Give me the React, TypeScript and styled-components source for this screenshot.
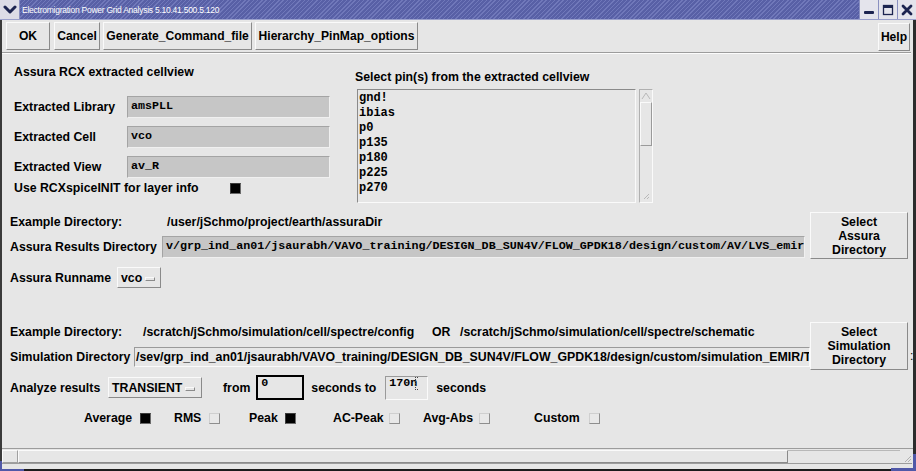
import React from "react";
import styled, { createGlobalStyle } from "styled-components";

const sans = `"Liberation Sans", Arial, Helvetica, sans-serif`;
const mono = `"Liberation Mono", "Courier New", monospace`;

const Global = createGlobalStyle`
  html, body { margin: 0; padding: 0; background: #e6e6e6; overflow: hidden; }
  #root { width: 916px; height: 471px; }
  * { box-sizing: border-box; }
`;

const Window = styled.div`
  width: 916px;
  height: 471px;
  display: flex;
  flex-direction: column;
  background: #e6e6e6;
  font-family: ${sans};
  color: #000;
`;

const TitleBar = styled.div`
  height: 20px;
  flex: none;
  display: flex;
  align-items: stretch;
  background: repeating-linear-gradient(135deg, #5860a6 0px, #5860a6 2px, #7078ba 2px, #7078ba 3px);
  border-bottom: 1px solid #9aa0cc;
`;

const MenuButton = styled.div`
  width: 20px;
  display: flex;
  align-items: center;
  justify-content: center;
  background: #dcdce6;
  border-right: 1px solid #8a90c0;
`;

const TitleText = styled.div`
  flex: 1;
  display: flex;
  align-items: center;
  padding-left: 2px;
  color: #fff;
  font-size: 8.5px;
  letter-spacing: -0.25px;
  white-space: nowrap;
`;

const WinButton = styled.div`
  width: 19px;
  display: flex;
  align-items: center;
  justify-content: center;
  background: #e4e4ec;
  border-left: 1px solid #8a90c0;
`;

const Frame = styled.div`
  position: relative;
  flex: 1;
  display: flex;
  flex-direction: column;
  border-left: 2px solid #3a3a3a;
  border-right: 3px solid #2c2c2c;
  border-bottom: 2px solid #1c1c1c;
  &::before {
    content: "";
    position: absolute;
    left: -2px;
    bottom: -2px;
    width: 22px;
    height: 8px;
    border-left: 2px solid #5058a8;
    border-bottom: 2px solid #5058a8;
  }
  &::after {
    content: "";
    position: absolute;
    right: -3px;
    bottom: -2px;
    width: 22px;
    height: 14px;
    border-right: 3px solid #5058a8;
    border-bottom: 3px solid #5058a8;
  }
`;

const Toolbar = styled.div`
  height: 32px;
  flex: none;
  display: flex;
  align-items: flex-start;
  padding: 2px 3px 0 4px;
`;

const ToolButton = styled.div<{ $w: number; $ml?: number; $auto?: boolean }>`
  width: ${(p) => p.$w}px;
  height: 28px;
  margin-left: ${(p) => (p.$auto ? "auto" : `${p.$ml ?? 0}px`)};
  margin-top: ${(p) => (p.$auto ? 1 : 0)}px;
  display: flex;
  align-items: center;
  justify-content: center;
  background: #e6e6e6;
  border: 1px solid;
  border-color: #fafafa #8a8a8a #8a8a8a #fafafa;
  font-weight: bold;
  font-size: 12.1px;
  white-space: nowrap;
`;

const Separator = styled.div`
  height: 2px;
  flex: none;
  margin-right: 2px;
  border-top: 1px solid #9c9c9c;
  border-bottom: 1px solid #fcfcfc;
`;

const TopSection = styled.div`
  display: flex;
  padding-left: 12px;
  flex: none;
`;

const LeftPanel = styled.div`
  width: 316px;
  padding-top: 11px;
  display: flex;
  flex-direction: column;
`;

const Heading = styled.div`
  height: 14px;
  line-height: 14px;
  font-weight: bold;
  font-size: 12.3px;
  white-space: nowrap;
`;

const FieldList = styled.div`
  margin-top: 17px;
  display: flex;
  flex-direction: column;
  gap: 8px;
`;

const Row = styled.div<{ $h: number; $mt?: number }>`
  height: ${(p) => p.$h}px;
  margin-top: ${(p) => p.$mt ?? 0}px;
  display: flex;
  align-items: center;
  flex: none;
`;

const Label = styled.div<{ $w?: number }>`
  width: ${(p) => (p.$w ? `${p.$w}px` : "auto")};
  flex: none;
  font-weight: bold;
  font-size: 12.3px;
  white-space: nowrap;
`;

const Value = styled.div<{ $w?: number }>`
  width: ${(p) => (p.$w ? `${p.$w}px` : "auto")};
  flex: none;
  font-weight: bold;
  font-size: 12.3px;
  white-space: nowrap;
`;

const ReadField = styled.div<{ $w: number }>`
  width: ${(p) => p.$w}px;
  height: 100%;
  flex: none;
  overflow: hidden;
  white-space: nowrap;
  background: #c6c6c6;
  border: 1px solid;
  border-color: #a4a4a4 #f0f0f0 #f0f0f0 #a4a4a4;
  font-family: ${mono};
  font-weight: bold;
  font-size: 11.7px;
  padding: 2px 0 0 3px;
`;

const TextField = styled.div<{ $w: number }>`
  width: ${(p) => p.$w}px;
  height: 100%;
  flex: none;
  overflow: hidden;
  white-space: nowrap;
  background: #e6e6e6;
  border: 1px solid;
  border-color: #9a9a9a #fafafa #fafafa #9a9a9a;
  font-weight: bold;
  font-size: 12.35px;
  line-height: 18px;
  padding-left: 1px;
`;

const Check = styled.span<{ $on?: boolean }>`
  display: inline-block;
  width: 11px;
  height: 11px;
  flex: none;
  background: ${(p) => (p.$on ? "#000" : "#e8e8e8")};
  border: 1px solid;
  border-color: ${(p) => (p.$on ? "#3a3a3a #6a6a6a #6a6a6a #3a3a3a" : "#cfcfcf #8e8e8e #8e8e8e #cfcfcf")};
`;

const RightPanel = styled.div`
  margin-left: 25px;
  padding-top: 16px;
  display: flex;
  flex-direction: column;
`;

const ListWrap = styled.div`
  margin-top: 5px;
  margin-left: 2px;
  display: flex;
  height: 114px;
`;

const ListBox = styled.div`
  width: 279px;
  height: 100%;
  border: 1px solid;
  border-color: #8a8a8a #fafafa #fafafa #8a8a8a;
  padding: 1px 0 0 1px;
  font-family: ${mono};
  font-weight: bold;
  font-size: 12px;
  line-height: 15px;
  overflow: hidden;
`;

const VScroll = styled.div`
  width: 14px;
  margin-left: 3px;
  height: 100%;
  display: flex;
  flex-direction: column;
  border: 1px solid;
  border-color: #b0b0b0 #fafafa #fafafa #b0b0b0;
`;

const ScrollArrow = styled.div`
  height: 12px;
  flex: none;
  display: flex;
  align-items: center;
  justify-content: center;
`;

const VThumb = styled.div`
  height: 44px;
  flex: none;
  border: 1px solid;
  border-color: #fafafa #9a9a9a #9a9a9a #fafafa;
`;

const VTrack = styled.div`
  flex: 1;
`;

const Section = styled.div<{ $mt: number }>`
  display: flex;
  align-items: flex-start;
  padding-left: 8px;
  margin-top: ${(p) => p.$mt}px;
  flex: none;
`;

const Column = styled.div<{ $w: number }>`
  width: ${(p) => p.$w}px;
  display: flex;
  flex-direction: column;
  flex: none;
`;

const SideButton = styled.div<{ $h: number; $ml?: number }>`
  width: 98px;
  height: ${(p) => p.$h}px;
  margin-left: ${(p) => p.$ml ?? 0}px;
  flex: none;
  display: flex;
  align-items: center;
  justify-content: center;
  text-align: center;
  background: #e6e6e6;
  border: 1px solid;
  border-color: #fafafa #8a8a8a #8a8a8a #fafafa;
  font-weight: bold;
  font-size: 12.3px;
  line-height: 14px;
`;

const Dropdown = styled.div<{ $w: number }>`
  width: ${(p) => p.$w}px;
  height: 21px;
  flex: none;
  display: flex;
  align-items: center;
  padding-left: 3px;
  background: #e6e6e6;
  border: 1px solid;
  border-color: #fafafa #8a8a8a #8a8a8a #fafafa;
  font-weight: bold;
  font-size: 12.3px;
`;

const DropBar = styled.span`
  width: 10px;
  height: 4px;
  margin-left: 3px;
  margin-top: 3px;
  background: #e6e6e6;
  border: 1px solid;
  border-color: #fafafa #8a8a8a #8a8a8a #fafafa;
`;

const EntryBox = styled.div<{ $w: number; $ml: number; $strong?: boolean }>`
  width: ${(p) => p.$w}px;
  height: ${(p) => (p.$strong ? 25 : 24)}px;
  margin-left: ${(p) => p.$ml}px;
  flex: none;
  position: relative;
  background: #e6e6e6;
  border: ${(p) => (p.$strong ? "2px solid #000" : "1px solid")};
  border-color: ${(p) => (p.$strong ? "#000" : "#9a9a9a #fafafa #fafafa #9a9a9a")};
  font-family: ${mono};
  font-weight: bold;
  font-size: 11.7px;
  line-height: 13px;
  padding: 0 0 0 3px;
`;

const Caret = styled.span`
  position: absolute;
  left: 30px;
  top: 0px;
  width: 3px;
  height: 13px;
  border-left: 1px dotted #444;
  border-top: 1px dotted #444;
  border-bottom: 1px dotted #444;
  transform: translateX(-1px);
`;

const Text = styled.span<{ $ml?: number }>`
  margin-left: ${(p) => p.$ml ?? 0}px;
  font-weight: bold;
  font-size: 12.3px;
  white-space: nowrap;
`;

const Stray = styled.div`
  width: 3px;
  margin-left: 2px;
  height: 14px;
  align-self: flex-start;
  margin-top: 28px;
  font-size: 12px;
  line-height: 12px;
  overflow: hidden;
`;

const CheckLine = styled.div`
  display: flex;
  align-items: center;
  height: 12px;
  margin-top: 12px;
  padding-left: 82px;
  flex: none;
`;

const CheckItem = styled.div<{ $w: number; $lw: number }>`
  width: ${(p) => p.$w}px;
  display: grid;
  grid-template-columns: ${(p) => p.$lw}px 11px;
  align-items: center;
  flex: none;
`;

const Spacer = styled.div`
  flex: 1;
`;

const BottomBar = styled.div`
  height: 21px;
  flex: none;
  border-top: 1px solid #9c9c9c;
  padding: 1px 0 0 0;
  display: flex;
  flex-direction: column;
`;

const HScroll = styled.div`
  height: 14px;
  display: flex;
  margin-right: 1px;
  border-bottom: 1px solid #9c9c9c;
`;

const HArrow = styled.div`
  width: 16px;
  flex: none;
  border: 1px solid;
  border-color: #fafafa #a0a0a0 #a0a0a0 #fafafa;
`;

const HThumb = styled.div`
  flex: none;
  border: 1px solid;
  border-color: #fafafa #8a8a8a #8a8a8a #fafafa;
`;

const HTrack = styled.div`
  flex: 1;
  border-top: 1px solid #b8b8b8;
`;

const Grip = styled.div`
  width: 12px;
  flex: none;
  display: flex;
  align-items: flex-end;
  justify-content: flex-end;
`;

const pins = ["gnd!", "ibias", "p0", "p135", "p180", "p225", "p270"];

const checks = [
  { label: "Average", w: 90, lw: 56, on: true },
  { label: "RMS", w: 75, lw: 35, on: false },
  { label: "Peak", w: 84, lw: 36, on: true },
  { label: "AC-Peak", w: 90, lw: 56, on: false },
  { label: "Avg-Abs", w: 111, lw: 56, on: false },
  { label: "Custom", w: 80, lw: 55, on: false },
];

export default function App() {
  return (
    <>
      <Global />
      <Window>
        <TitleBar>
          <MenuButton>
            <svg width="14" height="10" viewBox="0 0 14 10">
              <path d="M2 2 L7 7 L12 2" fill="none" stroke="#1c2450" strokeWidth="3" strokeLinecap="round" strokeLinejoin="round" />
            </svg>
          </MenuButton>
          <TitleText>Electromigration Power Grid Analysis 5.10.41.500.5.120</TitleText>
          <WinButton>
            <svg width="14" height="14" viewBox="0 0 14 14">
              <rect x="2" y="8" width="10" height="3" rx="1" fill="#1c2450" />
            </svg>
          </WinButton>
          <WinButton>
            <svg width="14" height="14" viewBox="0 0 14 14">
              <rect x="2.5" y="2.5" width="9" height="9" fill="none" stroke="#1c2450" strokeWidth="1.3" />
              <rect x="2" y="2" width="10" height="3" fill="#1c2450" />
            </svg>
          </WinButton>
          <WinButton>
            <svg width="14" height="14" viewBox="0 0 14 14">
              <path d="M3 3 L11 11 M11 3 L3 11" stroke="#1c2450" strokeWidth="2.8" strokeLinecap="round" />
            </svg>
          </WinButton>
        </TitleBar>
        <Frame>
          <Toolbar>
            <ToolButton $w={44}>OK</ToolButton>
            <ToolButton $w={46} $ml={4}>Cancel</ToolButton>
            <ToolButton $w={149} $ml={3}>Generate_Command_file</ToolButton>
            <ToolButton $w={163} $ml={3}>Hierarchy_PinMap_options</ToolButton>
            <ToolButton $w={32} $auto>Help</ToolButton>
          </Toolbar>
          <Separator />
          <TopSection>
            <LeftPanel>
              <Heading>Assura RCX extracted cellview</Heading>
              <FieldList>
                <Row $h={22}>
                  <Label $w={113}>Extracted Library</Label>
                  <ReadField $w={203}>amsPLL</ReadField>
                </Row>
                <Row $h={22}>
                  <Label $w={113}>Extracted Cell</Label>
                  <ReadField $w={203}>vco</ReadField>
                </Row>
                <Row $h={22}>
                  <Label $w={113}>Extracted View</Label>
                  <ReadField $w={203}>av_R</ReadField>
                </Row>
              </FieldList>
              <Row $h={14} $mt={3}>
                <Label $w={216}>Use RCXspiceINIT for layer info</Label>
                <Check $on />
              </Row>
            </LeftPanel>
            <RightPanel>
              <Heading>Select pin(s) from the extracted cellview</Heading>
              <ListWrap>
                <ListBox>
                  {pins.map((p) => (
                    <div key={p}>{p}</div>
                  ))}
                </ListBox>
                <VScroll>
                  <ScrollArrow>
                    <svg width="10" height="8" viewBox="0 0 10 8">
                      <path d="M1 7 L5 1 L9 7" fill="none" stroke="#b8b8b8" strokeWidth="1" />
                    </svg>
                  </ScrollArrow>
                  <VThumb />
                  <VTrack />
                  <ScrollArrow>
                    <svg width="10" height="8" viewBox="0 0 10 8">
                      <path d="M3 7 L8 2 M6 7 L8 5" fill="none" stroke="#b8b8b8" strokeWidth="1" />
                    </svg>
                  </ScrollArrow>
                </VScroll>
              </ListWrap>
            </RightPanel>
          </TopSection>

          <Section $mt={9}>
            <Column $w={795}>
              <Row $h={20}>
                <Label $w={157}>Example Directory:</Label>
                <Value>/user/jSchmo/project/earth/assuraDir</Value>
              </Row>
              <Row $h={22} $mt={4}>
                <Label $w={152}>Assura Results Directory</Label>
                <ReadField $w={643}>
                  v/grp_ind_an01/jsaurabh/VAVO_training/DESIGN_DB_SUN4V/FLOW_GPDK18/design/custom/AV/LVS_emir
                </ReadField>
              </Row>
              <Row $h={21} $mt={9}>
                <Label $w={107}>Assura Runname</Label>
                <Dropdown $w={44}>
                  vco
                  <DropBar />
                </Dropdown>
              </Row>
            </Column>
            <SideButton $h={47} $ml={5}>
              Select
              <br />
              Assura
              <br />
              Directory
            </SideButton>
          </Section>

          <Section $mt={34}>
            <Column $w={800}>
              <Row $h={20}>
                <Label $w={133}>Example Directory:</Label>
                <Value $w={289}>/scratch/jSchmo/simulation/cell/spectre/config</Value>
                <Value $w={28}>OR</Value>
                <Value>/scratch/jSchmo/simulation/cell/spectre/schematic</Value>
              </Row>
              <Row $h={20} $mt={5}>
                <Label $w={124}>Simulation Directory</Label>
                <TextField $w={676}>
                  /sev/grp_ind_an01/jsaurabh/VAVO_training/DESIGN_DB_SUN4V/FLOW_GPDK18/design/custom/simulation_EMIR/T
                </TextField>
              </Row>
              <Row $h={25} $mt={8}>
                <Label $w={98}>Analyze results</Label>
                <Dropdown $w={94}>
                  TRANSIENT
                  <DropBar />
                </Dropdown>
                <Text $ml={21}>from</Text>
                <EntryBox $w={48} $ml={6} $strong>
                  0
                </EntryBox>
                <Text $ml={7}>seconds to</Text>
                <EntryBox $w={43} $ml={9}>
                  170n
                  <Caret />
                </EntryBox>
                <Text $ml={8}>seconds</Text>
              </Row>
            </Column>
            <SideButton $h={48}>
              Select
              <br />
              Simulation
              <br />
              Directory
            </SideButton>
            <Stray>:</Stray>
          </Section>

          <CheckLine>
            {checks.map((c) => (
              <CheckItem key={c.label} $w={c.w} $lw={c.lw}>
                <Label>{c.label}</Label>
                <Check $on={c.on} />
              </CheckItem>
            ))}
          </CheckLine>

          <Spacer />
          <BottomBar>
            <HScroll>
              <HArrow />
              <HThumb style={{ width: 770 }} />
              <HTrack />
              <Grip>
                <svg width="10" height="10" viewBox="0 0 10 10">
                  <path d="M3 9 L9 3 M6 9 L9 6" stroke="#b0b0b0" strokeWidth="1" />
                </svg>
              </Grip>
            </HScroll>
          </BottomBar>
        </Frame>
      </Window>
    </>
  );
}
